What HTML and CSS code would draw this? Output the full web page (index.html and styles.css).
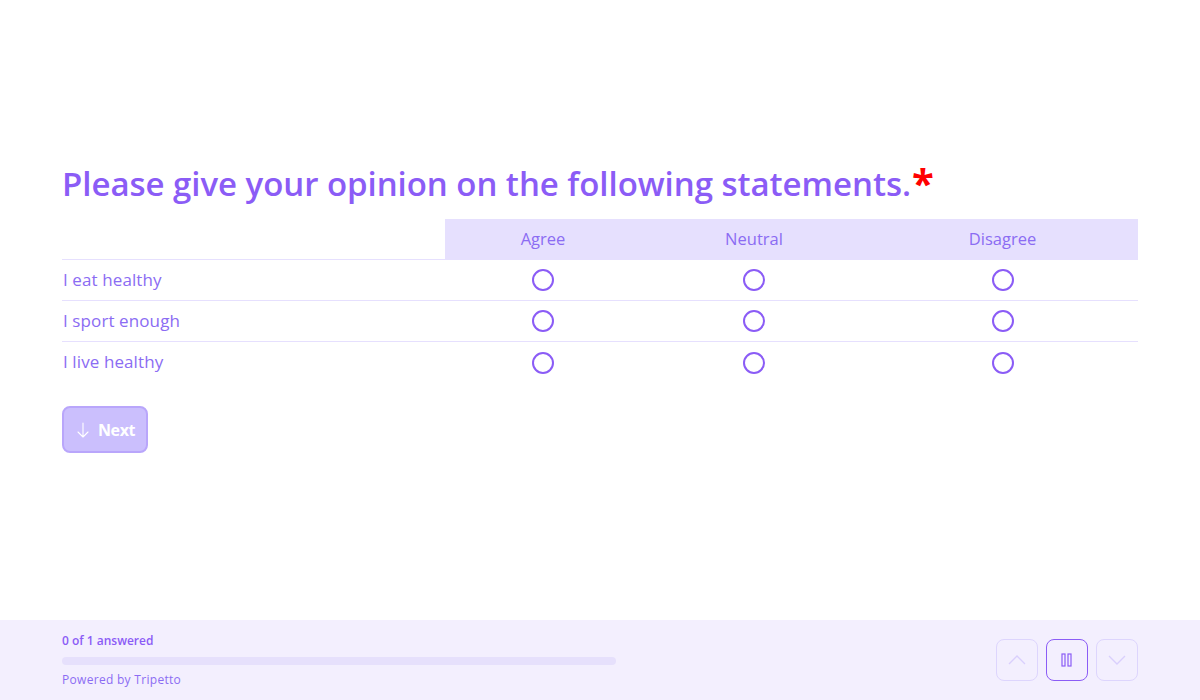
FILE: index.html
```html
<!DOCTYPE html>
<html>
<head>
<meta charset="utf-8">
<link rel="stylesheet" href="styles.css">
</head>
<body>
<div class="page">
  <main class="main">
    <div class="block">
      <h1 class="title">Please give your opinion on the following statements.<span class="req">*</span></h1>
      <table class="matrix">
        <colgroup>
          <col class="c-label"><col class="c-agree"><col class="c-neutral"><col class="c-dis">
        </colgroup>
        <thead>
          <tr><th class="empty"></th><th>Agree</th><th>Neutral</th><th>Disagree</th></tr>
        </thead>
        <tbody>
          <tr><td class="label">I eat healthy</td><td><span class="radio"></span></td><td><span class="radio"></span></td><td><span class="radio"></span></td></tr>
          <tr><td class="label">I sport enough</td><td><span class="radio"></span></td><td><span class="radio"></span></td><td><span class="radio"></span></td></tr>
          <tr><td class="label">I live healthy</td><td><span class="radio"></span></td><td><span class="radio"></span></td><td><span class="radio"></span></td></tr>
        </tbody>
      </table>
      <button class="next">
        <svg width="14" height="18" viewBox="0 0 14 18" fill="none" stroke="#fff" stroke-width="1.1" stroke-linecap="round" stroke-linejoin="round"><path d="M7 2v14M2 11l5 5 5-5"/></svg>
        <span>Next</span>
      </button>
    </div>
  </main>
  <footer class="footer">
    <div class="progress">
      <div class="answered">0 of 1 answered</div>
      <div class="bar"></div>
      <div class="powered">Powered by Tripetto</div>
    </div>
    <div class="nav">
      <button class="navbtn dim">
        <svg width="18" height="10" viewBox="0 0 18 10" fill="none" stroke="#d9cffd" stroke-width="1.3"><path d="M1 9l8-8 8 8"/></svg>
      </button>
      <button class="navbtn active">
        <svg width="12" height="14" viewBox="0 0 12 14" fill="none" stroke="#8b5cf6" stroke-width="1.2"><rect x="1" y="1" width="3" height="12"/><rect x="7" y="1" width="3" height="12"/></svg>
      </button>
      <button class="navbtn dim">
        <svg width="18" height="10" viewBox="0 0 18 10" fill="none" stroke="#d9cffd" stroke-width="1.3"><path d="M1 1l8 8 8-8"/></svg>
      </button>
    </div>
  </footer>
</div>
</body>
</html>
```
FILE: styles.css
```css
* { box-sizing: border-box; }
html, body { margin: 0; padding: 0; }
body {
  font-family: "Open Sans", "Noto Sans", sans-serif;
  color: #8b5cf6;
  background: #fff;
}
.page {
  width: 1200px;
  height: 700px;
  display: flex;
  flex-direction: column;
}
.main {
  flex: 1;
  padding: 160px 62px 0 62px;
}
.title {
  margin: 0 0 14px 0;
  font-size: 33px;
  font-weight: 600;
  line-height: 42px;
  letter-spacing: -0.04px;
  color: #8b5cf6;
}
.req {
  color: #ff0000;
  font-weight: 700;
  font-size: 40px;
  margin-left: 1px;
  position: relative;
  top: 2px;
}
.matrix {
  width: 1076px;
  border-collapse: collapse;
  table-layout: fixed;
}
.c-label { width: 383px; }
.c-agree { width: 196px; }
.c-neutral { width: 226px; }
.c-dis { width: 271px; }
.matrix th {
  height: 40px;
  background: #e6e0fe;
  font-weight: 400;
  font-size: 16.5px;
  color: #8b6cf3;
  text-align: center;
  padding: 0;
  border-bottom: 1px solid #e6e0fe;
}
.matrix th.empty { background: transparent; border-bottom: 1px solid #e6e0fe; }
.matrix td {
  height: 41px;
  padding: 0;
  text-align: center;
  vertical-align: middle;
  border-bottom: 1px solid #e6e0fe;
}
.matrix tbody tr:last-child td { border-bottom: none; }
.matrix td.label {
  text-align: left;
  font-size: 17px;
  letter-spacing: 0.1px;
  color: #8b6cf3;
  padding-left: 1px;
}
.radio {
  display: inline-block;
  width: 22px;
  height: 22px;
  border: 2px solid #8b5cf6;
  border-radius: 50%;
  vertical-align: middle;
}
.next {
  margin-top: 24px;
  display: flex;
  align-items: center;
  gap: 8px;
  height: 47px;
  padding: 0 11px 0 12px;
  background: #cbbffd;
  border: 2px solid #b9a6fb;
  border-radius: 8px;
  color: #fff;
  font-family: "Open Sans", sans-serif;
  font-size: 16px;
  font-weight: 700;
  letter-spacing: -0.4px;
}
.footer {
  height: 80px;
  background: #f3effe;
  display: flex;
  justify-content: space-between;
  align-items: center;
  padding: 0 62px;
}
.progress {
  width: 554px;
  display: flex;
  flex-direction: column;
}
.answered {
  font-size: 12px;
  font-weight: 600;
  color: #8b5cf6;
  line-height: 16px;
  letter-spacing: 0;
}
.bar {
  height: 8px;
  background: #e6e0fc;
  border-radius: 4px;
  margin: 8px 0 7px 0;
}
.powered {
  font-size: 12px;
  color: #8b6cf3;
  line-height: 16px;
  letter-spacing: 0.3px;
}
.nav {
  display: flex;
  gap: 8px;
}
.navbtn {
  width: 42px;
  height: 42px;
  border-radius: 8px;
  background: transparent;
  display: flex;
  align-items: center;
  justify-content: center;
  padding: 0;
}
.navbtn.dim { border: 1px solid #ddd5fd; }
.navbtn.active { border: 1px solid #8b5cf6; }
```
